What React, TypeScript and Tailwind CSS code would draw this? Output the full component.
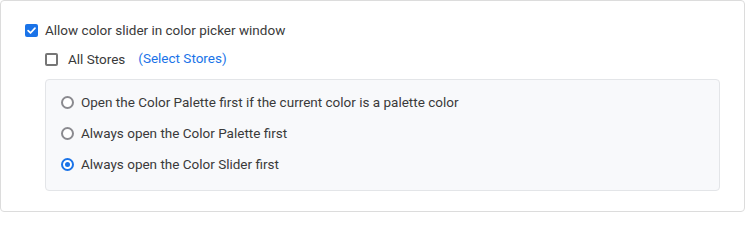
import React from "react";

const font = { fontFamily: "Roboto, 'Noto Sans', sans-serif" };

function Check({ checked }: { checked?: boolean }) {
  if (checked) {
    return (
      <span className="flex h-[13px] w-[13px] shrink-0 items-center justify-center rounded-[2px] bg-[#1a73e8]">
        <svg viewBox="0 0 12 12" className="h-[11px] w-[11px]">
          <path d="M2.3 6.2 4.9 8.7 9.8 3.4" fill="none" stroke="#fff" strokeWidth="1.9" strokeLinecap="round" strokeLinejoin="round" />
        </svg>
      </span>
    );
  }
  return <span className="h-[13px] w-[13px] shrink-0 rounded-[2px] border-2 border-[#767676] bg-white" />;
}

function Radio({ checked, label }: { checked?: boolean; label: string }) {
  return (
    <label className="flex h-[20px] items-center gap-[7px]">
      <span
        className={
          checked
            ? "flex h-[13px] w-[13px] shrink-0 items-center justify-center rounded-full border-2 border-[#1a73e8] bg-white"
            : "h-[13px] w-[13px] shrink-0 rounded-full border-2 border-[#8a8a8f] bg-white"
        }
      >
        {checked && <span className="h-[5px] w-[5px] rounded-full bg-[#1a73e8]" />}
      </span>
      <span>{label}</span>
    </label>
  );
}

export default function App() {
  return (
    <div style={font} className="h-[212px] w-[745px] bg-white text-[13.5px] text-[#3a3a3a]">
      <div className="h-full rounded-[4px] border border-[#dcdcdc] px-[24px] pt-[19px]">
        <label className="flex h-[20px] items-center gap-[7px]">
          <Check checked />
          <span>Allow color slider in color picker window</span>
        </label>
        <div className="ml-[20px] mt-[9px] flex h-[20px] items-center">
          <Check />
          <span className="ml-[10px]">All Stores</span>
          <span className="ml-[13px] -translate-y-[1px] text-[#1a73e8]">(Select Stores)</span>
        </div>
        <div className="ml-[20px] mt-[10px] flex h-[112px] flex-col gap-[11px] rounded-[4px] border border-[#e3e5e8] bg-[#f8f9fb] px-[15px] pt-[12px]">
          <Radio label="Open the Color Palette first if the current color is a palette color" />
          <Radio label="Always open the Color Palette first" />
          <Radio checked label="Always open the Color Slider first" />
        </div>
      </div>
    </div>
  );
}
